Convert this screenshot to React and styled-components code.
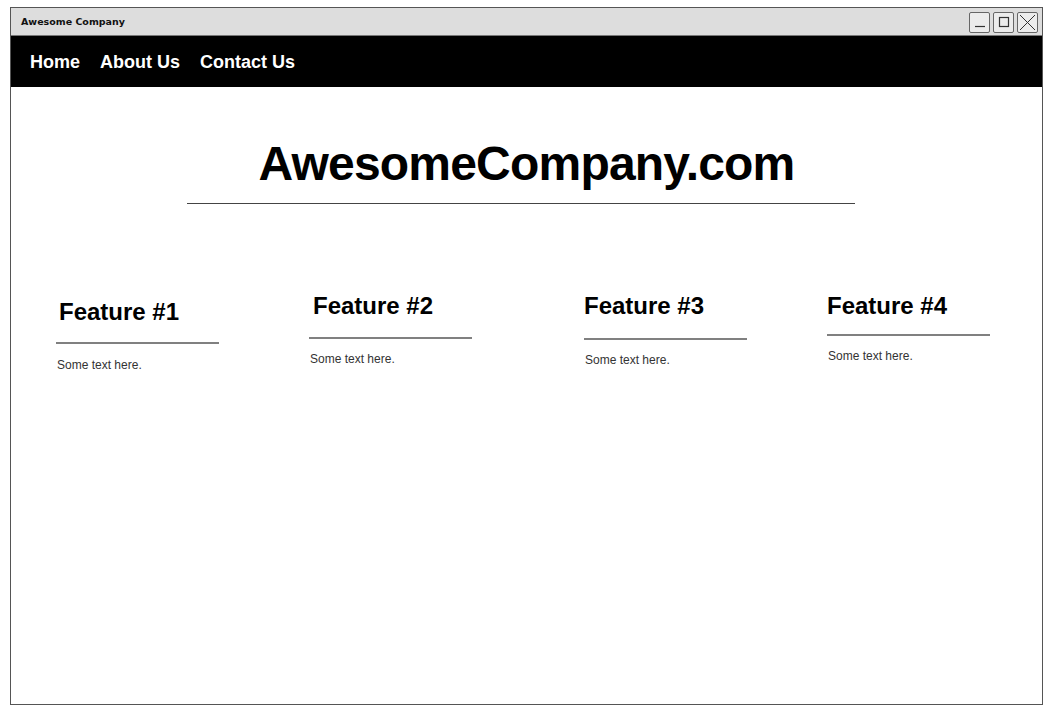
import React from "react";
import styled, { createGlobalStyle } from "styled-components";

const GlobalStyle = createGlobalStyle`
  body {
    margin: 0;
    background: #fff;
    font-family: "Liberation Sans", Arial, sans-serif;
  }
`;

const features = [
  { title: "Feature #1", left: 45, top: 211, gap: 16, indent: 3, textGap: 14 },
  { title: "Feature #2", left: 90, top: 205, gap: 17, indent: 4, textGap: 13 },
  { title: "Feature #3", left: 112, top: 205, gap: 18, indent: 0, textGap: 13 },
  { title: "Feature #4", left: 80, top: 205, gap: 14, indent: 0, textGap: 13 },
];

const App = () => {
  return (
    <>
      <GlobalStyle />
      <Window>
        <TitleBar>
          <TitleText>Awesome Company</TitleText>
          <Controls>
            <ControlButton>
              <svg width="12" height="12" viewBox="0 0 12 12">
                <line x1="1" y1="10.5" x2="11" y2="10.5" stroke="#333" strokeWidth="1.2" />
              </svg>
            </ControlButton>
            <ControlButton>
              <svg width="12" height="12" viewBox="0 0 12 12">
                <rect x="1.5" y="1.5" width="9" height="9" fill="none" stroke="#333" strokeWidth="1.2" />
              </svg>
            </ControlButton>
            <ControlButton>
              <svg width="17" height="17" viewBox="0 0 17 17">
                <path d="M1 1 L16 16 M16 1 L1 16" stroke="#333" strokeWidth="1" />
              </svg>
            </ControlButton>
          </Controls>
        </TitleBar>
        <NavBar>
          <NavLink>Home</NavLink>
          <NavLink>About Us</NavLink>
          <NavLink>Contact Us</NavLink>
        </NavBar>
        <Hero>
          <HeroTitle>AwesomeCompany.com</HeroTitle>
          <HeroRule />
        </Hero>
        <FeatureRow>
          {features.map((f) => (
            <FeatureCard key={f.title} $left={f.left} $top={f.top}>
              <FeatureTitle $indent={f.indent}>{f.title}</FeatureTitle>
              <FeatureRule $gap={f.gap} />
              <FeatureText $gap={f.textGap}>Some text here.</FeatureText>
            </FeatureCard>
          ))}
        </FeatureRow>
      </Window>
    </>
  );
};

const Window = styled.div`
  margin: 7px 0 0 10px;
  width: 1031px;
  height: 696px;
  border: 1px solid #555;
  box-sizing: content-box;
  display: flex;
  flex-direction: column;
  background: #fff;
`;

const TitleBar = styled.div`
  height: 27px;
  background: #dddddd;
  border-bottom: 1px solid #777;
  display: flex;
  align-items: center;
  justify-content: space-between;
  padding: 0 4px 0 10px;
`;

const TitleText = styled.span`
  font-family: "DejaVu Sans", sans-serif;
  font-weight: bold;
  font-size: 9.5px;
  color: #111;
`;

const Controls = styled.div`
  display: flex;
  gap: 3px;
  margin-top: 1px;
`;

const ControlButton = styled.div`
  width: 21px;
  height: 21px;
  border: 1px solid #666;
  border-radius: 2px;
  display: flex;
  align-items: center;
  justify-content: center;
  box-sizing: border-box;
  background: #ececec;
`;

const NavBar = styled.nav`
  height: 51px;
  background: #000;
  display: flex;
  align-items: center;
  gap: 20px;
  padding: 2px 0 0 19px;
  box-sizing: border-box;
`;

const NavLink = styled.span`
  color: #fff;
  font-family: "Liberation Sans", Arial, sans-serif;
  font-weight: bold;
  font-size: 18px;
`;

const Hero = styled.div`
  display: flex;
  flex-direction: column;
`;

const HeroTitle = styled.h1`
  margin: 49px 0 0 0;
  text-align: center;
  font-size: 48px;
  line-height: 56px;
  letter-spacing: -0.8px;
  font-weight: bold;
  color: #000;
`;

const HeroRule = styled.div`
  margin: 11px 0 0 176px;
  width: 668px;
  height: 1px;
  background: #444;
`;

const FeatureRow = styled.div`
  display: flex;
  align-items: flex-start;
`;

const FeatureCard = styled.div`
  margin-left: ${(p) => p.$left}px;
  margin-top: ${(p) => p.$top - 117}px;
  width: 163px;
  display: flex;
  flex-direction: column;
`;

const FeatureTitle = styled.h2`
  margin: 0;
  padding-left: ${(p) => p.$indent}px;
  font-size: 24px;
  line-height: 28px;
  font-weight: bold;
  color: #000;
`;

const FeatureRule = styled.div`
  margin-top: ${(p) => p.$gap}px;
  height: 2px;
  background: #808080;
`;

const FeatureText = styled.p`
  margin: ${(p) => p.$gap}px 0 0 1px;
  font-size: 12px;
  line-height: 14px;
  color: #333;
`;

export default App;
